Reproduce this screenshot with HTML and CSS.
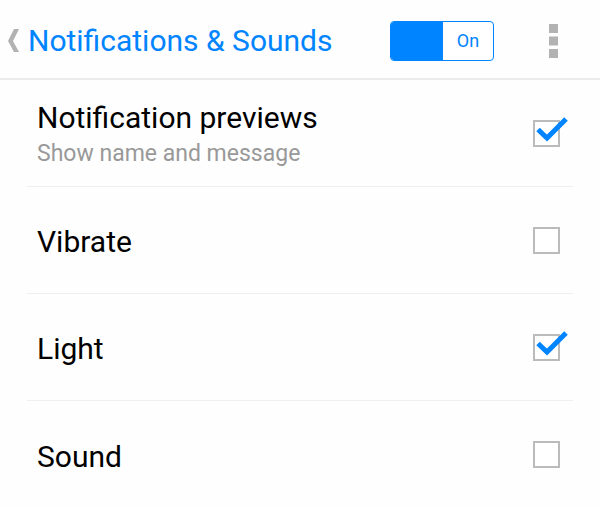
FILE: index.html
```html
<!DOCTYPE html>
<html lang="en">
<head>
<meta charset="utf-8">
<meta name="viewport" content="width=device-width, initial-scale=1">
<title>Notifications &amp; Sounds</title>
<link rel="stylesheet" href="styles.css">
</head>
<body>
<header class="bar">
  <a class="back" href="#">
    <svg class="back-icon" width="12" height="24" viewBox="0 0 12 24" aria-hidden="true"><path d="M6 0H11L5 12l6 11H6L0 12z"/></svg>
    <h1 class="title">Notifications &amp; Sounds</h1>
  </a>
  <button class="switch" type="button" role="switch" aria-checked="true" aria-label="Notifications">
    <span class="switch-fill"></span>
    <span class="switch-text">On</span>
  </button>
  <button class="more" type="button" aria-label="More options">
    <svg class="more-icon" width="9" height="34" viewBox="0 0 9 34" aria-hidden="true"><path d="M0 0h9v9H0zM0 12.500h9v9H0zM0 25h9v9H0z"/></svg>
  </button>
</header>
<main>
  <ul class="list">
    <li class="row">
      <label class="text" for="previews">
        <span class="name">Notification previews</span>
        <span class="note">Show name and message</span>
      </label>
      <span class="check">
        <input class="box" type="checkbox" id="previews" checked>
        <svg class="tick" width="36" height="30" viewBox="0 0 36 30" aria-hidden="true"><path d="M5 12.500l9 8.500L33 2"/></svg>
      </span>
    </li>
    <li class="row">
      <label class="text" for="vibrate"><span class="name">Vibrate</span></label>
      <span class="check">
        <input class="box" type="checkbox" id="vibrate">
        <svg class="tick" width="36" height="30" viewBox="0 0 36 30" aria-hidden="true"><path d="M5 12.500l9 8.500L33 2"/></svg>
      </span>
    </li>
    <li class="row">
      <label class="text" for="light"><span class="name">Light</span></label>
      <span class="check">
        <input class="box" type="checkbox" id="light" checked>
        <svg class="tick" width="36" height="30" viewBox="0 0 36 30" aria-hidden="true"><path d="M5 12.500l9 8.500L33 2"/></svg>
      </span>
    </li>
    <li class="row">
      <label class="text" for="sound"><span class="name">Sound</span></label>
      <span class="check">
        <input class="box" type="checkbox" id="sound">
        <svg class="tick" width="36" height="30" viewBox="0 0 36 30" aria-hidden="true"><path d="M5 12.500l9 8.500L33 2"/></svg>
      </span>
    </li>
  </ul>
</main>
</body>
</html>
```
FILE: styles.css
```css
* {
  box-sizing: border-box;
}

body {
  margin: 0;
  background: #fefefe;
  color: #000;
  font-family: Roboto, "Liberation Sans", sans-serif;
}

button {
  padding: 0;
  border: 0;
  background: none;
  font: inherit;
}

.bar {
  display: flex;
  align-items: center;
  height: 80px;
  padding: 4px 42px 0 8px;
  border-bottom: 2px solid #ebebeb;
}

.back {
  display: flex;
  align-items: center;
  gap: 8px;
  margin-right: auto;
  color: #0084ff;
  text-decoration: none;
}

.back-icon,
.more-icon {
  display: block;
  fill: #b2b2b2;
}

.title {
  margin: 0;
  font-size: 30px;
  font-weight: 400;
  line-height: 36px;
  white-space: nowrap;
}

.switch {
  display: flex;
  width: 104px;
  height: 40px;
  margin-right: 55px;
  overflow: hidden;
  border: 1px solid #0084ff;
  border-radius: 4px;
  background: #fff;
  color: #0084ff;
}

.switch-fill {
  flex: 1;
  align-self: stretch;
  background: #0084ff;
}

.switch-text {
  width: 50px;
  align-self: center;
  font-size: 18px;
  line-height: 40px;
}

.list {
  margin: 0;
  padding: 0 27px;
  list-style: none;
}

.row {
  display: flex;
  align-items: center;
  justify-content: space-between;
  min-height: 107px;
  padding: 0 13px 0 10px;
  border-bottom: 1px solid #efefef;
}

.row:last-child {
  border-bottom: 0;
}

.text {
  display: flex;
  flex-direction: column;
  gap: 2px;
  padding-top: 4px;
}

.name {
  font-size: 30px;
  line-height: 36px;
}

.note {
  color: #999;
  font-size: 23px;
  line-height: 32px;
}

.check {
  position: relative;
  display: flex;
}

.box {
  width: 27px;
  height: 27px;
  margin: 0;
  appearance: none;
  border: 2px solid #bbb;
  background: #fff;
}

.tick {
  position: absolute;
  top: -3px;
  left: 0;
  display: none;
  fill: none;
  stroke: #0084ff;
  stroke-width: 5;
  pointer-events: none;
}

.box:checked + .tick {
  display: block;
}
```
